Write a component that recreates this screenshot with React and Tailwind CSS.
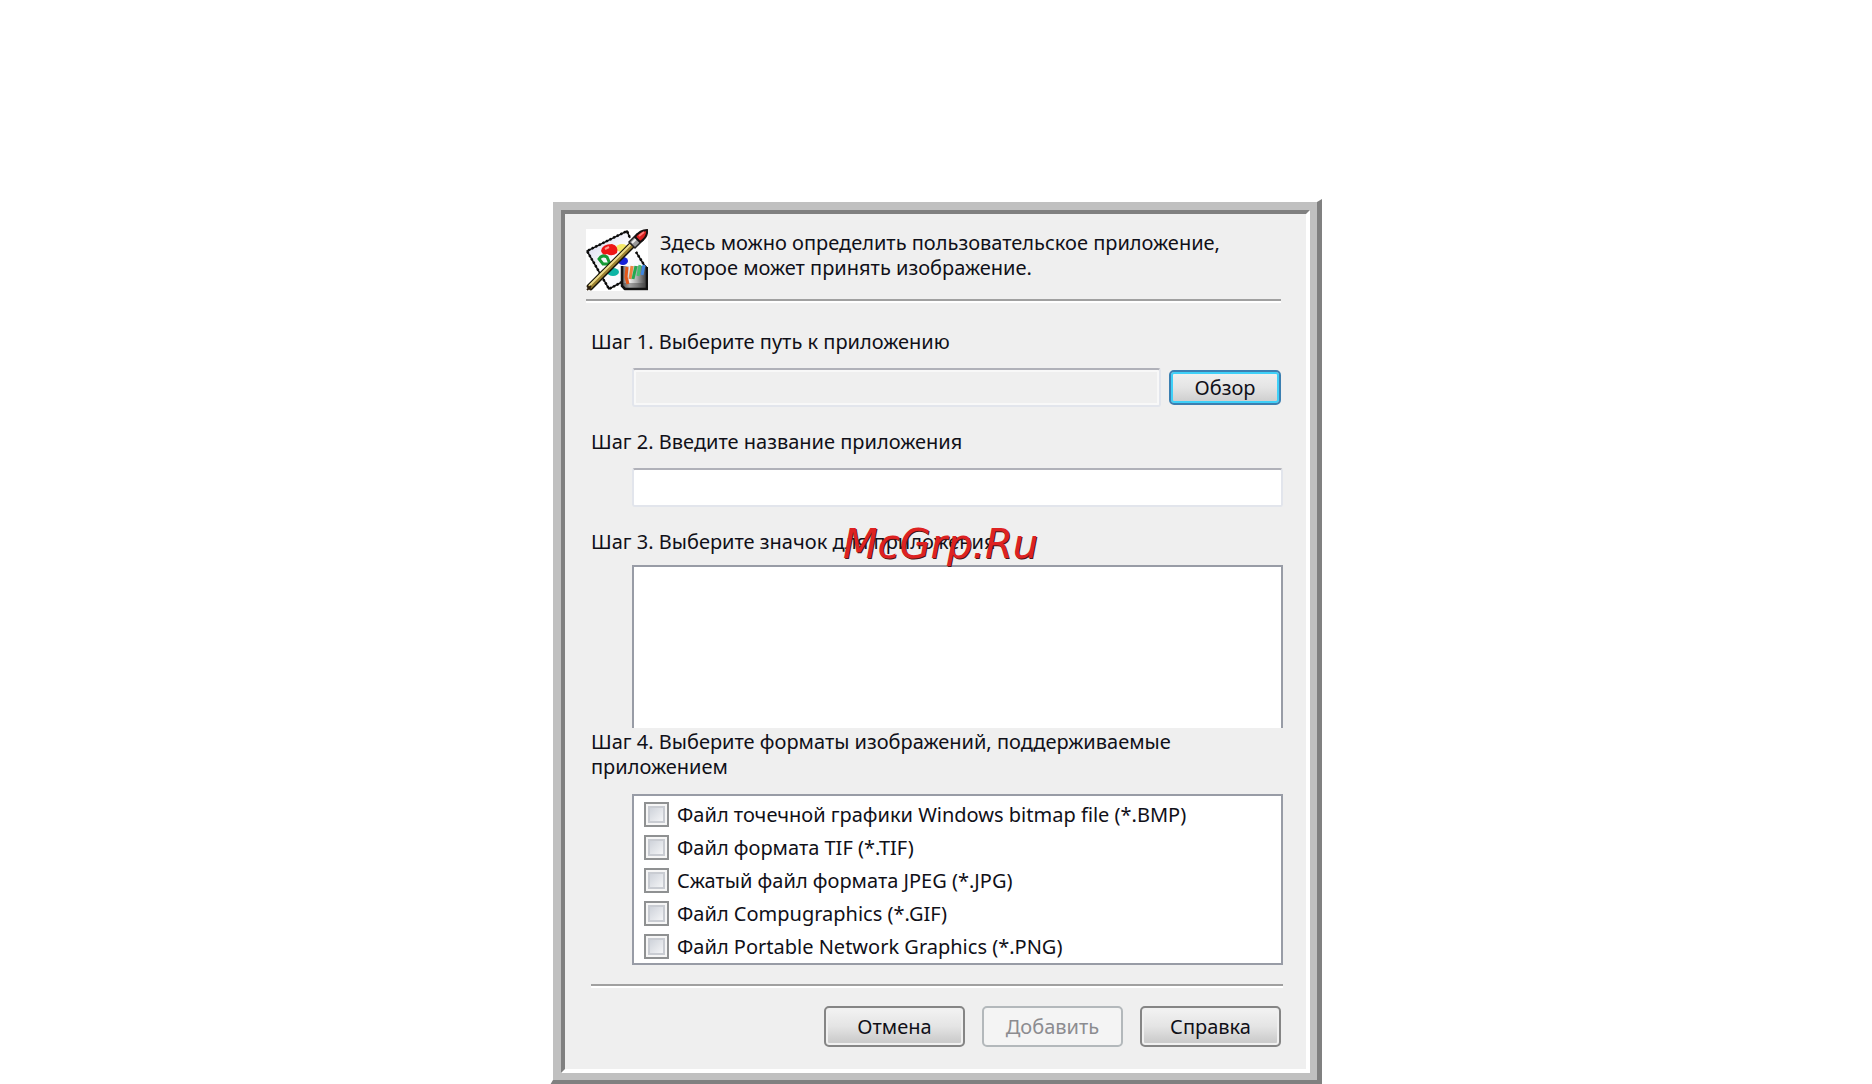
const formats = [
  "Файл точечной графики Windows bitmap file (*.BMP)",
  "Файл формата TIF (*.TIF)",
  "Сжатый файл формата JPEG (*.JPG)",
  "Файл Compugraphics (*.GIF)",
  "Файл Portable Network Graphics (*.PNG)",
];

function PaintIcon() {
  return (
    <svg viewBox="0 0 62 62" className="h-[62px] w-[62px] shrink-0" aria-hidden="true">
      <defs>
        <linearGradient id="paper" x1="0" y1="0" x2="1" y2="1">
          <stop offset="0" stopColor="#d0d2ea" />
          <stop offset="0.5" stopColor="#ffffff" />
          <stop offset="1" stopColor="#eceefa" />
        </linearGradient>
        <linearGradient id="cup" x1="0" y1="0" x2="1" y2="0">
          <stop offset="0" stopColor="#555555" />
          <stop offset="0.3" stopColor="#eeeeee" />
          <stop offset="0.6" stopColor="#aaaaaa" />
          <stop offset="1" stopColor="#333333" />
        </linearGradient>
        <filter id="soft" x="-10%" y="-10%" width="120%" height="120%">
          <feGaussianBlur stdDeviation="0.6" />
        </filter>
      </defs>
      <rect width="62" height="62" fill="#ffffff" />
      <path d="M1 22 L41 2 L60 37 L60 48 L23 60 Z" fill="url(#paper)" />
      <g fill="none" stroke="#0c0c0c">
        <path d="M36 53 L23 60 L1 22 L41 2 L44 9 M50 23 L60 39" strokeWidth="1.5" />
        <path d="M36 53 L23 60 L1 22 L41 2 L44 9 M50 23 L60 39" strokeWidth="2.5" strokeDasharray="2 2" />
      </g>
      <g filter="url(#soft)">
        <ellipse cx="36" cy="19" rx="6" ry="4" fill="#f4e96b" />
        <path d="M13 30 Q16 25 21 28 L24 35 L17 35 Z" fill="none" stroke="#169a34" strokeWidth="3" />
        <path d="M15 22 Q16 15 26 15 Q33 17 31 24 Q26 28 21 25 Q17 27 15 22" fill="#ee1717" />
        <ellipse cx="37" cy="32" rx="5" ry="4" fill="#1620d8" />
        <ellipse cx="27" cy="43" rx="6" ry="4" fill="#11b5a6" />
        <path d="M19 20 L23 18" stroke="#ff9a94" strokeWidth="2" />
      </g>
      <path d="M36 37 H61 V61 H38 L36 58 Z" fill="url(#cup)" />
      <path d="M37 54 H61 V61 H38 Z" fill="#444444" opacity="0.45" />
      <path d="M36 37 V57 L39 60 H61 V38" fill="none" stroke="#111111" strokeWidth="2.5" />
      <g fill="none" strokeWidth="3">
        <path d="M41 38 L40 48 L42 55" stroke="#e4571b" />
        <path d="M46 37 L44 50" stroke="#ef8240" />
        <path d="M50 37 L47 50" stroke="#26a850" />
        <path d="M54 36 L52 47" stroke="#43bf6f" />
        <path d="M58 36 L56 46" stroke="#3f86de" />
      </g>
      <path d="M3 59 L49 13" stroke="#151208" strokeWidth="7" />
      <path d="M3 59 L46 16" stroke="#9c8130" strokeWidth="4" />
      <path d="M3 57 L45 15" stroke="#eddc8c" strokeWidth="2" />
      <path d="M43 13 L51 5 L57 11 L49 19 Z" fill="#989898" stroke="#222222" strokeWidth="1.5" />
      <path d="M46 14 L50 10" stroke="#eeeeee" strokeWidth="2" />
      <path d="M49 8 Q54 1 61 1 Q62 8 54 13 Z" fill="#d92222" stroke="#161010" strokeWidth="2" />
      <path d="M53 7 L58 3" stroke="#ff7a75" strokeWidth="2" />
      <path d="M1 57 L5 61 M1 61 L5 57" stroke="#2d1f0c" strokeWidth="2" />
    </svg>
  );
}

function Rule() {
  return <div className="h-1 border-t-2 border-b-2 border-t-[#a0a0a0] border-b-white" />;
}

const button =
  "h-[41px] w-[141px] rounded-[5px] border-2 border-[#858585] bg-linear-to-b from-[#f3f3f3] from-0% via-[#e4e4e4] via-50% to-[#cccccc] to-90% shadow-[inset_0_0_0_2px_#f0f0f0]";

const field =
  "h-[39px] min-w-0 flex-1 rounded-[3px] border-2 border-[#e2e5ec] border-t-[#b0b1b9] px-2 outline-none";

export default function App() {
  return (
    <main className="flex justify-center bg-white pt-[199px] font-['Noto_Sans','Open_Sans',sans-serif] text-[20px] leading-[25px] text-[#101018]">
      <div className="w-full max-w-[772px] border-t-[3px] border-r-[5px] border-b-[5px] border-l-[3px] border-t-white border-r-[#808080] border-b-[#808080] border-l-white">
        <div className="border-t-8 border-r-[7px] border-b-[7px] border-l-8 border-[#c0c0c0]">
          <form className="border-4 border-t-[#808080] border-r-white border-b-white border-l-[#808080] bg-[#efefef] pt-[15px] pr-[23px] pb-[22px] pl-[21px]">
            <header className="mr-[2px]">
              <div className="mb-2 flex gap-3">
                <PaintIcon />
                <p className="pt-px">
                  Здесь можно определить пользовательское приложение,
                  <br />
                  которое может принять изображение.
                </p>
              </div>
              <Rule />
            </header>

            <div className="pl-[5px]">
              <label htmlFor="path" className="mt-[26px] block">Шаг 1. Выберите путь к приложению</label>
              <div className="mt-[14px] mr-[2px] flex items-center gap-2 pl-[41px]">
                <input id="path" type="text" readOnly className={field + " bg-[#efefef] shadow-[inset_0_0_0_2px_#f8f8f8]"} />
                <button
                  type="button"
                  className="h-[35px] w-[112px] rounded-[5px] border-2 border-[#3c7fb1] bg-linear-to-b from-[#f1f1f1] via-[#e4e4e4] to-[#cccccc] leading-[27px] shadow-[inset_0_0_0_2px_#3fd0f8]"
                >
                  Обзор
                </button>
              </div>

              <label htmlFor="name" className="mt-[22px] block">Шаг 2. Введите название приложения</label>
              <div className="mt-[14px] flex pl-[41px]">
                <input id="name" type="text" className={field + " bg-white"} />
              </div>

              <div className="relative mt-[22px]">
                <h2 id="icons">Шаг 3. Выберите значок для приложения</h2>
                <span className="pointer-events-none absolute -top-[5px] left-[252px] font-['DejaVu_Sans',sans-serif] text-[40px] leading-[40px] text-[#dd2222] italic [text-shadow:1px_1px_0_#4a1515]">
                  McGrp.Ru
                </span>
              </div>
              <div role="listbox" aria-labelledby="icons" className="mt-[11px] ml-[41px] h-[163px] border-2 border-b-0 border-[#989ca6] bg-white" />

              <fieldset>
                <legend className="pt-px">
                  Шаг 4. Выберите форматы изображений, поддерживаемые
                  <br />
                  приложением
                </legend>
                <div className="mt-[15px] ml-[41px] border-2 border-[#989ca6] bg-white pt-[2px]">
                  {formats.map((name) => (
                    <label key={name} className="flex h-[33px] items-center gap-2 pl-[10px]">
                      <input
                        type="checkbox"
                        className="size-[25px] shrink-0 appearance-none border-2 border-[#8f9192] bg-linear-to-br from-[#c4c9d2] to-[#ffffff] shadow-[inset_0_0_0_2px_#f6f6f6,inset_0_0_0_4px_#c9ccd2]"
                      />
                      <span>{name}</span>
                    </label>
                  ))}
                </div>
              </fieldset>

              <div className="mt-[19px]">
                <Rule />
              </div>
              <div className="mt-[18px] mr-[2px] flex justify-end gap-[17px]">
                <button type="button" className={button}>Отмена</button>
                <button type="button" disabled className="h-[41px] w-[141px] rounded-[5px] border-2 border-[#b3b8bb] bg-[#f4f4f4] text-[#8c8c90]">
                  Добавить
                </button>
                <button type="button" className={button}>Справка</button>
              </div>
            </div>
          </form>
        </div>
      </div>
    </main>
  );
}
